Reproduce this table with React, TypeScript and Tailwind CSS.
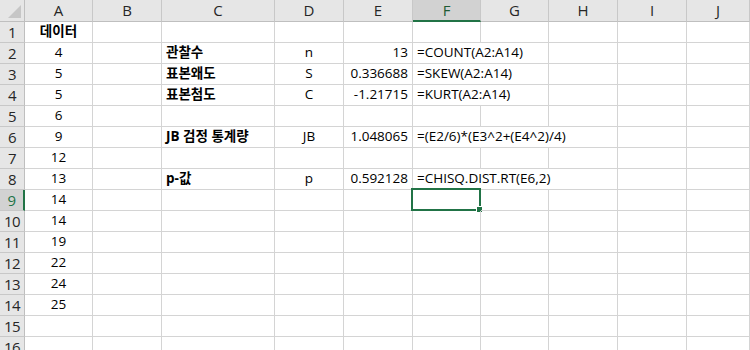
import React from 'react'

type Cell = {
  text?: string
  bold?: boolean
  align?: 'left' | 'center' | 'right'
  span?: number
}

// column letters (row header column comes first in the grid template)
const columns = ['A', 'B', 'C', 'D', 'E', 'F', 'G', 'H', 'I', 'J']

// sheet contents keyed by row number, then by column letter
const sheet: Record<number, Record<string, Cell>> = {
  1: { A: { text: '데이터', bold: true, align: 'center' } },
  2: {
    A: { text: '4', align: 'center' },
    C: { text: '관찰수', bold: true },
    D: { text: 'n', align: 'center' },
    E: { text: '13', align: 'right' },
    F: { text: '=COUNT(A2:A14)', span: 2 },
  },
  3: {
    A: { text: '5', align: 'center' },
    C: { text: '표본왜도', bold: true },
    D: { text: 'S', align: 'center' },
    E: { text: '0.336688', align: 'right' },
    F: { text: '=SKEW(A2:A14)', span: 2 },
  },
  4: {
    A: { text: '5', align: 'center' },
    C: { text: '표본첨도', bold: true },
    D: { text: 'C', align: 'center' },
    E: { text: '-1.21715', align: 'right' },
    F: { text: '=KURT(A2:A14)', span: 2 },
  },
  5: { A: { text: '6', align: 'center' } },
  6: {
    A: { text: '9', align: 'center' },
    C: { text: 'JB 검정 통계량', bold: true },
    D: { text: 'JB', align: 'center' },
    E: { text: '1.048065', align: 'right' },
    F: { text: '=(E2/6)*(E3^2+(E4^2)/4)', span: 3 },
  },
  7: { A: { text: '12', align: 'center' } },
  8: {
    A: { text: '13', align: 'center' },
    C: { text: 'p-값', bold: true },
    D: { text: 'p', align: 'center' },
    E: { text: '0.592128', align: 'right' },
    F: { text: '=CHISQ.DIST.RT(E6,2)', span: 3 },
  },
  9: { A: { text: '14', align: 'center' } },
  10: { A: { text: '14', align: 'center' } },
  11: { A: { text: '19', align: 'center' } },
  12: { A: { text: '22', align: 'center' } },
  13: { A: { text: '24', align: 'center' } },
  14: { A: { text: '25', align: 'center' } },
}

const activeCol = 'F'
const activeRow = 9
const rowCount = 16

const spanClass: Record<number, string> = {
  1: '',
  2: 'col-span-2',
  3: 'col-span-3',
}

const alignClass = {
  left: 'justify-start pl-1',
  center: 'justify-center',
  right: 'justify-end pr-1',
}

function CornerCell() {
  return (
    <div className="relative bg-[#e6e6e6] border-r border-b border-[#bfbfbf]">
      <svg className="absolute right-[3px] bottom-[3px]" width="13" height="13" viewBox="0 0 13 13">
        <polygon points="13,0 13,13 0,13" fill="#c6c6c6" />
      </svg>
    </div>
  )
}

function ColumnHeader({ letter }: { letter: string }) {
  const active = letter === activeCol
  return (
    <div
      className={`flex items-center justify-center border-r border-[#c8c8c8] text-[15px] ${
        active
          ? 'bg-[#d2d2d2] text-[#1e5b34] border-b-2 border-b-[#217346]'
          : 'bg-[#e6e6e6] text-[#262626] border-b border-b-[#bfbfbf]'
      }`}
    >
      {letter}
    </div>
  )
}

function RowHeader({ n }: { n: number }) {
  const active = n === activeRow
  return (
    <div
      className={`flex items-end justify-center pb-[1px] border-b border-[#c8c8c8] text-[15px] leading-[18px] tracking-[-0.5px] ${
        active
          ? 'bg-[#d2d2d2] text-[#217346] border-r-2 border-r-[#217346]'
          : 'bg-[#e6e6e6] text-[#262626] border-r border-r-[#bfbfbf]'
      }`}
    >
      {n}
    </div>
  )
}

function SheetRow({ n }: { n: number }) {
  const data = sheet[n] ?? {}
  const cells: React.ReactNode[] = []
  let i = 0
  while (i < columns.length) {
    const col = columns[i]
    const cell = data[col]
    const span = cell?.span ?? 1
    const selected = n === activeRow && col === activeCol
    cells.push(
      <div
        key={col}
        className={`relative flex items-end pb-[2px] whitespace-nowrap border-r border-b border-[#d4d4d4] leading-[17px] text-black ${
          spanClass[span]
        } ${alignClass[cell?.align ?? 'left']} ${cell?.bold ? 'font-bold' : ''}`}
      >
        {cell?.text}
        {selected && (
          <>
            <div className="absolute -left-[2px] -top-[2px] -right-px -bottom-px border-2 border-[#217346]" />
            <div className="absolute -right-[3px] -bottom-[3px] w-[7px] h-[7px] bg-[#217346] border border-white" />
          </>
        )}
      </div>
    )
    i += span
  }
  return (
    <>
      <RowHeader n={n} />
      {cells}
    </>
  )
}

export default function App() {
  const rows = Array.from({ length: rowCount }, (_, k) => k + 1)
  return (
    <div className="w-[750px] h-[350px] overflow-hidden bg-white text-[13.5px] font-['Open_Sans','Noto_Sans_CJK_KR',sans-serif]">
      <div className="grid grid-cols-[25px_68px_69px_113px_69px_69px_68px_68px_69px_69px_63px] grid-rows-[22px_repeat(16,21px)]">
        <CornerCell />
        {columns.map((c) => (
          <ColumnHeader key={c} letter={c} />
        ))}
        {rows.map((n) => (
          <SheetRow key={n} n={n} />
        ))}
      </div>
    </div>
  )
}
